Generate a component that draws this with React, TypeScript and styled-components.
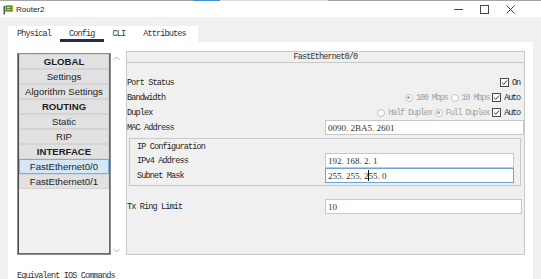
import React from 'react';
import styled, { createGlobalStyle } from 'styled-components';

const GlobalStyle = createGlobalStyle`
    html, body {
        margin: 0;
        padding: 0;
        background: #f0f0f0;
    }
    body {
        width: 541px;
        height: 279px;
        overflow: hidden;
    }
`;

const MONO = `"Liberation Mono", "DejaVu Sans Mono", monospace`;

const Window = styled.div`
    width: 541px;
    height: 279px;
    display: flex;
    flex-direction: column;
    overflow: hidden;
    background: #f0f0f0;
`;

const TopEdge = styled.div`
    flex: none;
    height: 1px;
    background: linear-gradient(
        to right,
        #a5a5a5 0 193px,
        #3e8fd8 193px 220px,
        #dcdcdc 220px 328px,
        #a5a5a5 328px
    );
`;

const TitleBar = styled.div`
    flex: none;
    height: 16px;
    display: flex;
    align-items: center;
    padding: 0 18px 0 3px;
    background: #ffffff;
    font-family: "Liberation Sans", Arial, sans-serif;
    font-size: 8px;
    color: #222;
`;

const TitleText = styled.span`
    margin-left: 2px;
`;

const Controls = styled.div`
    margin-left: auto;
    display: flex;
    height: 100%;
`;

const ControlButton = styled.div`
    width: 26px;
    display: flex;
    align-items: center;
    justify-content: center;
`;

const Body = styled.div`
    flex: 1;
    min-height: 0;
    display: flex;
    flex-direction: column;
    padding: 9px 8px 0;
`;

const TabStrip = styled.div`
    flex: none;
    width: 190px;
    height: 16px;
    display: flex;
    background: #ffffff;
`;

const Tab = styled.div<{ $active?: boolean }>`
    display: flex;
    align-items: center;
    padding: 0 9px;
    font-family: ${MONO};
    font-size: 8.5px;
    letter-spacing: -0.85px;
    color: #333;
    box-shadow: ${(p) => (p.$active ? 'inset 0 -3px 0 #1f2f4d' : 'none')};
`;

const Sheet = styled.div`
    flex: 1;
    min-height: 0;
    display: flex;
    flex-direction: column;
    background: #ffffff;
    padding: 9px 8px 0 9px;
`;

const MainRow = styled.div`
    flex: none;
    display: flex;
    height: 204px;
`;

const ListBox = styled.div`
    box-sizing: border-box;
    width: 94px;
    height: 202px;
    margin-top: 2px;
    padding: 0 1px;
    border: 1px solid #8c8c8c;
    box-shadow: inset 1px 1px 0 #4e4e4e, inset -1px -1px 0 #6a6a6a;
    background: #f0f0f0;
    display: flex;
    flex-direction: column;
`;

const ListItem = styled.div<{ $heading?: boolean; $selected?: boolean }>`
    box-sizing: border-box;
    height: 15px;
    display: flex;
    align-items: center;
    justify-content: center;
    border: 1px solid ${(p) => (p.$selected ? '#78aee3' : '#d4d4d4')};
    background: ${(p) => (p.$selected ? '#d3e7f8' : '#e1e1e1')};
    font-family: "Liberation Sans", Arial, sans-serif;
    font-size: 9.6px;
    font-weight: ${(p) => (p.$heading ? 700 : 400)};
    color: #1e1e1e;
    white-space: nowrap;
`;

const ScrollBar = styled.div`
    box-sizing: border-box;
    width: 11px;
    height: 202px;
    margin-top: 2px;
    display: flex;
    flex-direction: column;
    justify-content: space-between;
    align-items: center;
    padding: 3px 0 2px;
`;

const RightPanel = styled.div`
    box-sizing: border-box;
    flex: 1;
    margin-left: 4px;
    height: 204px;
    border: 1px solid #c9c9c9;
    background: #f0f0f0;
    display: flex;
    flex-direction: column;
`;

const PanelHeader = styled.div`
    flex: none;
    height: 10px;
    border-bottom: 1px solid #c9c9c9;
    display: flex;
    align-items: center;
    justify-content: center;
    font-family: ${MONO};
    font-size: 8.5px;
    letter-spacing: -0.85px;
    color: #333;
`;

const Rows = styled.div`
    padding-top: 12px;
    display: flex;
    flex-direction: column;
`;

const Row = styled.div<{ $labelWidth?: number }>`
    display: grid;
    grid-template-columns: ${(p) => p.$labelWidth ?? 198}px 1fr;
    align-items: center;
    height: 15px;
`;

const Label = styled.span`
    font-family: ${MONO};
    font-size: 8.5px;
    letter-spacing: -0.85px;
    color: #262626;
    white-space: nowrap;
`;

const Options = styled.div`
    display: flex;
    align-items: center;
    justify-content: flex-end;
    gap: 3px;
    padding-right: 4px;
`;

const Option = styled.span<{ $disabled?: boolean }>`
    display: inline-flex;
    align-items: center;
    gap: 3px;
    font-family: ${MONO};
    font-size: 8.5px;
    letter-spacing: -1.15px;
    color: ${(p) => (p.$disabled ? '#a2a2a2' : '#262626')};
    white-space: nowrap;
`;

const CheckBox = styled.span`
    box-sizing: border-box;
    width: 9px;
    height: 9px;
    border: 1px solid #4a4a4a;
    background: #ffffff;
    display: inline-flex;
    align-items: center;
    justify-content: center;
`;

const Radio = styled.span<{ $checked?: boolean }>`
    box-sizing: border-box;
    width: 8px;
    height: 8px;
    border-radius: 50%;
    border: 1px solid #c2c2c2;
    background: #ffffff;
    display: inline-flex;
    align-items: center;
    justify-content: center;

    &::after {
        content: '';
        width: 3px;
        height: 3px;
        border-radius: 50%;
        background: ${(p) => (p.$checked ? '#a8a8a8' : 'transparent')};
    }
`;

const Field = styled.div<{ $focused?: boolean; $inset?: number }>`
    box-sizing: border-box;
    height: 15px;
    margin-right: ${(p) => p.$inset ?? 0}px;
    padding-left: 2px;
    display: flex;
    align-items: center;
    border: 1px solid ${(p) => (p.$focused ? '#6aa4dc' : '#c8c8c8')};
    background: #ffffff;
    font-family: "Liberation Serif", "Times New Roman", serif;
    font-size: 9px;
    color: #333;
    white-space: nowrap;
`;

const Caret = styled.span`
    display: inline-block;
    width: 1px;
    height: 11px;
    margin: 0 -0.5px;
    background: #111;
`;

const Group = styled.fieldset`
    box-sizing: border-box;
    margin: 3px 3px 0 2px;
    padding: 2px 6px 2px 7px;
    height: 48px;
    border: 1px solid #c9c9c9;
    min-width: 0;
`;

const GroupTitle = styled.div`
    height: 12px;
    display: flex;
    align-items: center;
    font-family: ${MONO};
    font-size: 8.5px;
    letter-spacing: -0.85px;
    color: #262626;
`;

const Spacer = styled.div<{ $h: number }>`
    height: ${(p) => p.$h}px;
`;

const Footer = styled.div`
    margin-top: 16px;
    font-family: ${MONO};
    font-size: 8.5px;
    letter-spacing: -0.85px;
    line-height: 10px;
    color: #333;
`;

const Check = () => (
    <svg width="7" height="7" viewBox="0 0 7 7">
        <path d="M1 3.6 L2.8 5.3 L6 1.5" fill="none" stroke="#333" strokeWidth="1" />
    </svg>
);

const Chevron = ({ up }: { up?: boolean }) => (
    <svg width="7" height="5" viewBox="0 0 7 5">
        <path
            d={up ? 'M0.5 4 L3.5 1 L6.5 4' : 'M0.5 1 L3.5 4 L6.5 1'}
            fill="none"
            stroke="#b5b5b5"
            strokeWidth="1"
        />
    </svg>
);

const AppIcon = () => (
    <svg width="11" height="11" viewBox="0 0 11 11">
        <rect x="0.5" y="2" width="1.5" height="8.5" fill="#555" />
        <rect x="2" y="1" width="8" height="7" fill="#c9b92a" />
        <rect x="3" y="2" width="6" height="5" fill="#4f8f2f" />
        <path d="M4 3.5 L7.5 3.5 M4 5.5 L7.5 5.5" stroke="#e8d84a" strokeWidth="1" />
    </svg>
);

const menu = [
    { label: 'GLOBAL', heading: true },
    { label: 'Settings' },
    { label: 'Algorithm Settings' },
    { label: 'ROUTING', heading: true },
    { label: 'Static' },
    { label: 'RIP' },
    { label: 'INTERFACE', heading: true },
    { label: 'FastEthernet0/0', selected: true },
    { label: 'FastEthernet0/1' },
];

const tabs = ['Physical', 'Config', 'CLI', 'Attributes'];

export default function App() {
    return (
        <>
            <GlobalStyle />
            <Window>
                <TopEdge />
                <TitleBar>
                    <AppIcon />
                    <TitleText>Router2</TitleText>
                    <Controls>
                        <ControlButton>
                            <svg width="9" height="9" viewBox="0 0 9 9">
                                <path d="M0 4.5 H9" stroke="#444" strokeWidth="1" />
                            </svg>
                        </ControlButton>
                        <ControlButton>
                            <svg width="9" height="9" viewBox="0 0 9 9">
                                <rect x="0.5" y="0.5" width="8" height="8" fill="none" stroke="#444" strokeWidth="1" />
                            </svg>
                        </ControlButton>
                        <ControlButton>
                            <svg width="9" height="9" viewBox="0 0 9 9">
                                <path d="M0.5 0.5 L8.5 8.5 M8.5 0.5 L0.5 8.5" stroke="#444" strokeWidth="1" />
                            </svg>
                        </ControlButton>
                    </Controls>
                </TitleBar>

                <Body>
                    <TabStrip>
                        {tabs.map((t) => (
                            <Tab key={t} $active={t === 'Config'}>
                                {t}
                            </Tab>
                        ))}
                    </TabStrip>

                    <Sheet>
                        <MainRow>
                            <ListBox>
                                {menu.map((m) => (
                                    <ListItem key={m.label} $heading={m.heading} $selected={m.selected}>
                                        {m.label}
                                    </ListItem>
                                ))}
                            </ListBox>
                            <ScrollBar>
                                <Chevron up />
                                <Chevron />
                            </ScrollBar>

                            <RightPanel>
                                <PanelHeader>FastEthernet0/0</PanelHeader>
                                <Rows>
                                    <Row>
                                        <Label>Port Status</Label>
                                        <Options>
                                            <Option>
                                                <CheckBox>
                                                    <Check />
                                                </CheckBox>
                                                On
                                            </Option>
                                        </Options>
                                    </Row>
                                    <Row>
                                        <Label>Bandwidth</Label>
                                        <Options>
                                            <Option $disabled>
                                                <Radio $checked />
                                                100 Mbps
                                            </Option>
                                            <Option $disabled>
                                                <Radio />
                                                10 Mbps
                                            </Option>
                                            <Option>
                                                <CheckBox>
                                                    <Check />
                                                </CheckBox>
                                                Auto
                                            </Option>
                                        </Options>
                                    </Row>
                                    <Row>
                                        <Label>Duplex</Label>
                                        <Options>
                                            <Option $disabled>
                                                <Radio />
                                                Half Duplex
                                            </Option>
                                            <Option $disabled>
                                                <Radio $checked />
                                                Full Duplex
                                            </Option>
                                            <Option>
                                                <CheckBox>
                                                    <Check />
                                                </CheckBox>
                                                Auto
                                            </Option>
                                        </Options>
                                    </Row>
                                    <Row>
                                        <Label>MAC Address</Label>
                                        <Field>0090. 2BA5. 2601</Field>
                                    </Row>

                                    <Group>
                                        <GroupTitle>IP Configuration</GroupTitle>
                                        <Row $labelWidth={188}>
                                            <Label>IPv4 Address</Label>
                                            <Field>192. 168. 2. 1</Field>
                                        </Row>
                                        <Row $labelWidth={188}>
                                            <Label>Subnet Mask</Label>
                                            <Field $focused>
                                                255. 255. 2<Caret />55. 0
                                            </Field>
                                        </Row>
                                    </Group>

                                    <Spacer $h={13} />
                                    <Row>
                                        <Label>Tx Ring Limit</Label>
                                        <Field $inset={2}>10</Field>
                                    </Row>
                                </Rows>
                            </RightPanel>
                        </MainRow>
                        <Footer>Equivalent IOS Commands</Footer>
                    </Sheet>
                </Body>
            </Window>
        </>
    );
}
